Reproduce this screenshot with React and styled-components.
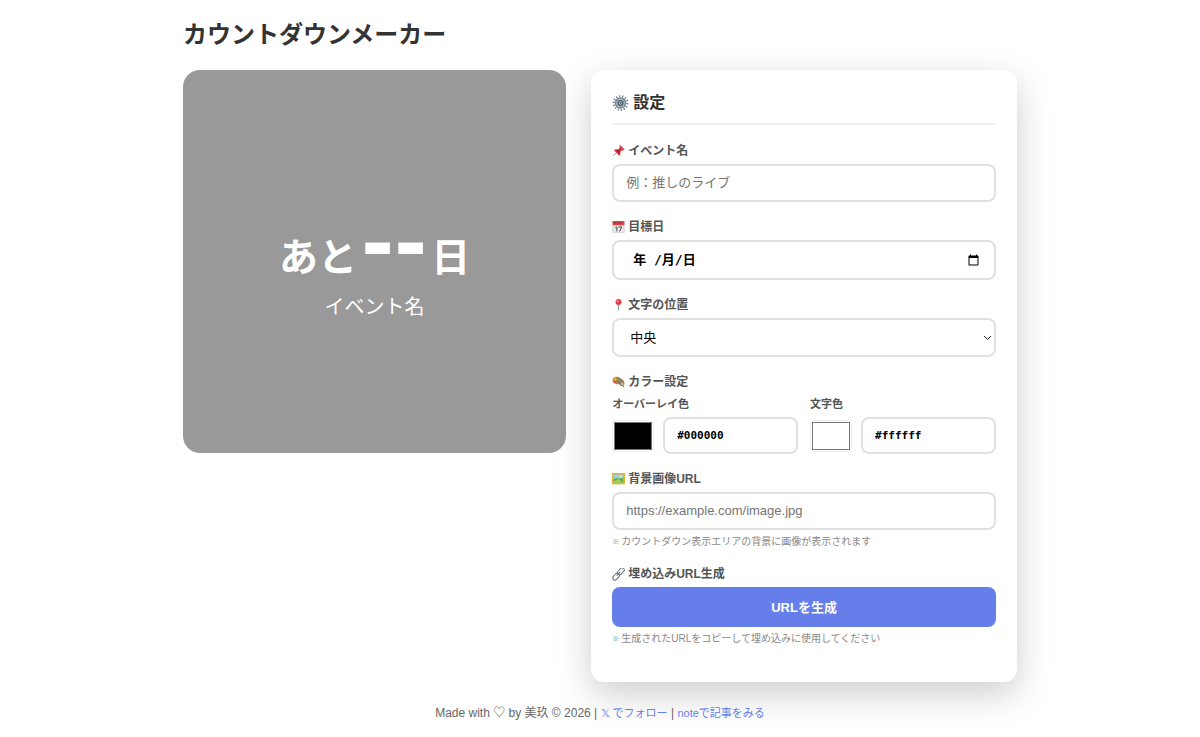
import React, { useState } from "react";
import styled, { createGlobalStyle } from "styled-components";

const GlobalStyle = createGlobalStyle`
  *, *::before, *::after { box-sizing: border-box; }
  body {
    margin: 0;
    background: #fff;
    color: #333;
    font-family: "Liberation Sans", "Noto Sans CJK JP", sans-serif;
  }
`;

const Page = styled.div`
  max-width: 874px;
  margin: 0 auto;
  padding: 17px 20px;
`;

const Title = styled.h1`
  margin: 0 0 17px;
  font-size: 24px;
  line-height: 36px;
  font-weight: 700;
`;

const Columns = styled.main`
  display: grid;
  grid-template-columns: minmax(0, 9fr) minmax(0, 10fr);
  gap: 25px;
  align-items: start;
`;

const Preview = styled.section`
  aspect-ratio: 1;
  padding-top: 28px;
  border-radius: 17px;
  background: #999;
  color: #fff;
  display: flex;
  flex-direction: column;
  align-items: center;
  justify-content: center;
  gap: 6px;
`;

const Count = styled.p`
  margin: 0;
  font-size: 39px;
  line-height: 56px;
  font-weight: 700;
`;

const Days = styled.span`
  font-family: "DejaVu Sans", sans-serif;
  font-size: 80px;
  line-height: 0;
  padding: 0 4px;
`;

const EventName = styled.p`
  margin: 0;
  font-size: 20px;
  line-height: 30px;
`;

const Card = styled.section`
  padding: 21px 21px 20px;
  border-radius: 13px;
  background: #fff;
  box-shadow: 0 12px 36px rgba(0, 0, 0, 0.2);
`;

const CardTitle = styled.h2`
  display: flex;
  align-items: center;
  gap: 4px;
  margin: 0 0 17px;
  padding-bottom: 8px;
  border-bottom: 2px solid #f0f0f0;
  font-size: 16px;
  line-height: 24px;
`;

const Field = styled.div`
  margin-bottom: 16px;
`;

const Label = styled.label`
  display: flex;
  align-items: center;
  gap: 3px;
  margin-bottom: 4px;
  color: #555;
  font-size: ${(p) => (p.$small ? 11 : 12)}px;
  line-height: 18px;
  font-weight: 700;
`;

const Input = styled.input`
  display: block;
  width: 100%;
  min-width: 0;
  height: ${(p) => p.$height || 38}px;
  padding: 0 12px 2px;
  border: 2px solid #e0e0e0;
  border-radius: 8px;
  background: #fff;
  color: #000;
  font-family: inherit;
  font-size: 13px;
  &::placeholder { color: #757575; }
`;

const CodeInput = styled(Input)`
  padding-bottom: 0;
  font-family: "DejaVu Sans Mono", monospace;
  font-size: 11px;
  font-weight: 700;
`;

const Overlaid = styled.div`
  position: relative;
`;

const DateInput = styled(Input)`
  padding-bottom: 0;
  &::-webkit-datetime-edit { opacity: ${(p) => (p.$empty ? 0 : 1)}; }
`;

const DateHint = styled.span`
  position: absolute;
  inset: 0 auto 0 21px;
  display: flex;
  align-items: center;
  font-family: "DejaVu Sans Mono", "Noto Sans CJK JP", monospace;
  font-size: 13px;
  line-height: 18px;
  font-weight: 700;
  white-space: pre;
  color: #000;
  pointer-events: none;
`;

const Select = styled.select`
  display: block;
  width: 100%;
  height: 39px;
  padding: 0 16px;
  border: 2px solid #e0e0e0;
  border-radius: 8px;
  background: #fff;
  color: #000;
  font-family: inherit;
  font-size: 13px;
  appearance: none;
`;

const Chevron = styled.svg`
  position: absolute;
  top: 0;
  bottom: 0;
  right: 4px;
  margin: auto 0;
  width: 9px;
  height: 9px;
  pointer-events: none;
`;

const Colors = styled.div`
  display: grid;
  grid-template-columns: 1fr 1fr;
  gap: 12px;
`;

const ColorRow = styled.div`
  display: flex;
  align-items: center;
  gap: 9px;
`;

const Swatch = styled.input`
  flex: none;
  width: 42px;
  height: 32px;
  padding: 1px;
  border: 1px solid #eee;
  border-radius: 4px;
  background: #fff;
  &::-webkit-color-swatch-wrapper { padding: 0; }
  &::-webkit-color-swatch { border: 1px solid #777; border-radius: 0; }
`;

const Help = styled.p`
  display: flex;
  align-items: center;
  gap: 2px;
  margin: 5px 0 0;
  color: #888;
  font-size: 10px;
  line-height: 14px;
`;

const Mark = styled.span`
  font-size: 7px;
  font-weight: 700;
`;

const Button = styled.button`
  display: block;
  width: 100%;
  height: 40px;
  padding: 0 0 1px;
  border: 0;
  border-radius: 8px;
  background: #667eea;
  color: #fff;
  font-family: inherit;
  font-size: 13px;
  font-weight: 700;
`;

const Footer = styled.footer`
  margin-top: 23px;
  color: #666;
  font-size: 12px;
  line-height: 16px;
  text-align: center;
`;

const Link = styled.a`
  color: #667eea;
  font-size: 11px;
  text-decoration: none;
`;

const Icon = styled.svg`
  flex: none;
  width: ${(p) => p.$size || 13}px;
  height: ${(p) => p.$size || 13}px;
`;

const Gear = () => (
  <Icon $size={17} viewBox="0 0 32 32" aria-hidden="true">
    <circle cx="16" cy="15" r="13" fill="none" stroke="#7d8b97" strokeWidth="4" strokeDasharray="2.5 3.3" />
    <circle cx="16" cy="15" r="9.5" fill="#b4c0c9" stroke="#7b8a96" strokeWidth="3" />
    <circle cx="16" cy="15" r="4.5" fill="#dfe8ef" stroke="#425363" strokeWidth="2.5" />
    <path d="M16 15 8 10M16 15l8-5M16 15v9" stroke="#71818d" strokeWidth="1.5" />
    <circle cx="16" cy="15" r="2" fill="#53718d" />
  </Icon>
);

const Pushpin = () => (
  <Icon viewBox="0 1 24 24" aria-hidden="true">
    <path d="M9 14 2 21" stroke="#8f9aa3" strokeWidth="1.8" strokeLinecap="round" />
    <path d="m15 1 8 8-2 2-3 0-3 3 .5 5-2 2L4 11l2-2 5 .5 3-3V3z" fill="#d3333b" />
    <path d="m15 1 8 8-2 1-7-7z" fill="#ef6264" />
    <path d="m9 10 6 5" stroke="#97161f" strokeWidth="2" />
  </Icon>
);

const Calendar = () => (
  <Icon viewBox="0 1 24 24" aria-hidden="true">
    <path d="M2 3h20l1 19H1z" fill="#e8e8e8" stroke="#bcbcbc" />
    <path d="M1 1h22v8H1z" fill="#d84a4c" />
    <path d="M4 3v3m3-3v3m4-3v3m3-3v3m4-3v3" stroke="#8d2529" strokeWidth="1.5" />
    <path d="m6 13 3-1v8M12 12h6l-4 8" fill="none" stroke="#444" strokeWidth="1.8" />
  </Icon>
);

const RoundPin = () => (
  <Icon viewBox="0 1 24 24" aria-hidden="true">
    <path d="M12 10v12" stroke="#8c979e" strokeWidth="2" />
    <circle cx="12" cy="6.5" r="5.5" fill="#df393c" />
    <circle cx="10.5" cy="5" r="2" fill="#f79891" />
  </Icon>
);

const Palette = () => (
  <Icon viewBox="0 1 24 24" aria-hidden="true">
    <path d="M1 8C2 2 10 1 16 5c6 3 9 9 6 13-3 3-7 1-8-1s-3 0-6-1C3 15 0 12 1 8z" fill="#bd8050" />
    <circle cx="6" cy="7" r="2.5" fill="#efb931" />
    <circle cx="12" cy="7" r="2.3" fill="#54a855" />
    <circle cx="17" cy="11" r="2.3" fill="#3c8fc5" />
    <circle cx="6" cy="12" r="2" fill="#d94b45" />
    <circle cx="18" cy="16" r="1.8" fill="#fff" />
    <path d="m9 10 13 11" stroke="#80552c" strokeWidth="1.5" />
  </Icon>
);

const Picture = () => (
  <Icon viewBox="0 1 24 24" aria-hidden="true">
    <path d="M0 1h24v21H0z" fill="#e1b438" />
    <path d="M3 4h18v15H3z" fill="#8bd5ef" />
    <path d="M3 13c5-5 9 0 18-3v9H3z" fill="#63ad3d" />
    <path d="m3 16 9-4 9 7H3z" fill="#a6cf54" />
    <circle cx="16" cy="7" r="2" fill="#fff3a5" />
  </Icon>
);

const Chain = () => (
  <Icon viewBox="0 1 24 24" aria-hidden="true">
    <g fill="none" stroke="#687782" strokeWidth="2">
      <rect x="9.5" y="3" width="14" height="8" rx="4" transform="rotate(-48 16.5 7)" />
      <rect x="0.5" y="13" width="14" height="8" rx="4" transform="rotate(-48 7.5 17)" />
      <path d="m8.5 15 7-7" />
    </g>
  </Icon>
);

function ColorField({ id, label, initial }) {
  const [value, setValue] = useState(initial);
  const update = (e) => setValue(e.target.value);
  const valid = /^#[0-9a-f]{6}$/i.test(value) ? value : initial;
  return (
    <div>
      <Label $small htmlFor={id}>{label}</Label>
      <ColorRow>
        <Swatch type="color" aria-label={label} value={valid} onChange={update} />
        <CodeInput id={id} type="text" $height={37} value={value} onChange={update} />
      </ColorRow>
    </div>
  );
}

export default function App() {
  const [name, setName] = useState("");
  const [date, setDate] = useState("");
  return (
    <>
      <GlobalStyle />
      <Page>
        <Title>カウントダウンメーカー</Title>
        <Columns>
          <Preview>
            <Count>あと<Days>--</Days>日</Count>
            <EventName>{name || "イベント名"}</EventName>
          </Preview>
          <Card>
            <CardTitle><Gear />設定</CardTitle>
            <Field>
              <Label htmlFor="name"><Pushpin />イベント名</Label>
              <Input id="name" type="text" placeholder="例：推しのライブ" value={name} onChange={(e) => setName(e.target.value)} />
            </Field>
            <Field>
              <Label htmlFor="date"><Calendar />目標日</Label>
              <Overlaid>
                <DateInput id="date" type="date" $height={40} $empty={!date} value={date} onChange={(e) => setDate(e.target.value)} />
                {!date && <DateHint aria-hidden="true">年 /月/日</DateHint>}
              </Overlaid>
            </Field>
            <Field>
              <Label htmlFor="position"><RoundPin />文字の位置</Label>
              <Overlaid>
                <Select id="position" defaultValue="center">
                  <option value="center">中央</option>
                  <option value="top">上</option>
                  <option value="bottom">下</option>
                </Select>
                <Chevron viewBox="0 0 9 9" aria-hidden="true">
                  <path d="m1 3 3.5 3.500L8 3" fill="none" stroke="#222" />
                </Chevron>
              </Overlaid>
            </Field>
            <Field>
              <Label as="div"><Palette />カラー設定</Label>
              <Colors>
                <ColorField id="overlay" label="オーバーレイ色" initial="#000000" />
                <ColorField id="text" label="文字色" initial="#ffffff" />
              </Colors>
            </Field>
            <Field>
              <Label htmlFor="image"><Picture />背景画像URL</Label>
              <Input id="image" type="url" placeholder="https://example.com/image.jpg" />
              <Help><Mark>※</Mark>カウントダウン表示エリアの背景に画像が表示されます</Help>
            </Field>
            <Field>
              <Label htmlFor="generate"><Chain />埋め込みURL生成</Label>
              <Button id="generate" type="button">URLを生成</Button>
              <Help><Mark>※</Mark>生成されたURLをコピーして埋め込みに使用してください</Help>
            </Field>
          </Card>
        </Columns>
        <Footer>
          Made with ♡ by 美玖 © 2026 | <Link href="#follow">𝕏 でフォロー</Link> | <Link href="#note">noteで記事をみる</Link>
        </Footer>
      </Page>
    </>
  );
}
